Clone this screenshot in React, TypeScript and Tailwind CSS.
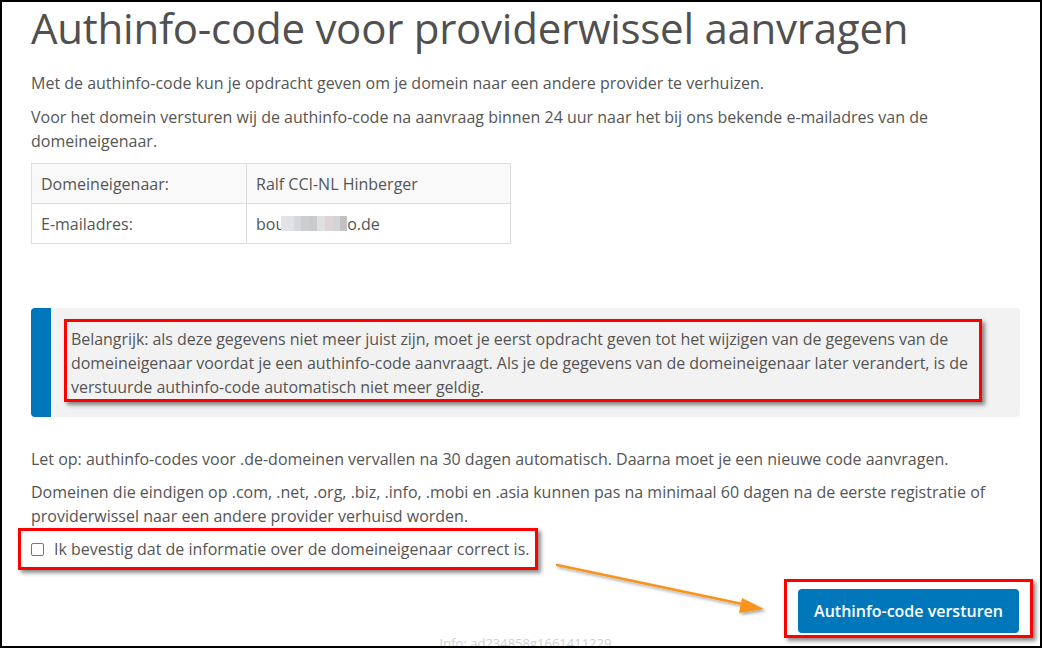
import React from "react";

export default function App() {
  const font = { fontFamily: '"Open Sans", "Noto Sans", sans-serif' };
  return (
    <div
      className="relative w-[1042px] h-[648px] overflow-hidden border-2 border-black bg-white text-[#555555]"
      style={font}
    >
      <div className="pl-[29px] pr-[20px] pt-[1px]">
        <h1 className="text-[42px] leading-[50px] font-medium text-[#505050] tracking-[-0.25px]">
          Authinfo-code voor providerwissel aanvragen
        </h1>
        <p className="mt-[18px] text-[16px] leading-[24px]">
          Met de authinfo-code kun je opdracht geven om je domein naar een andere provider te verhuizen.
        </p>
        <p className="mt-[10px] text-[16px] leading-[24px]">
          Voor het domein versturen wij de authinfo-code na aanvraag binnen 24 uur naar het bij ons bekende e-mailadres van de domeineigenaar.
        </p>
        <table className="mt-[10px] w-[480px] border-collapse text-[16px] leading-[24px]">
          <tbody>
            <tr className="h-10 bg-[#f9f9f9]">
              <td className="w-[215px] border border-[#dddddd] px-[9px]">Domeineigenaar:</td>
              <td className="border border-[#dddddd] px-[9px]">Ralf CCI-NL Hinberger</td>
            </tr>
            <tr className="h-10">
              <td className="border border-[#dddddd] px-[9px]">E-mailadres:</td>
              <td className="border border-[#dddddd] px-[9px]">
                <span className="inline-flex items-center">
                  bou
                  <span className="-ml-[4px] inline-flex h-[15px] items-stretch">
                    <span className="w-[6px] bg-[#e3e3e6]" />
                    <span className="w-[7px] bg-[#dfe2e8]" />
                    <span className="w-[7px] bg-[#d6d8dc]" />
                    <span className="w-[8px] bg-[#cdced2]" />
                    <span className="w-[8px] bg-[#c9cbcc]" />
                    <span className="w-[8px] bg-[#dfe0e0]" />
                    <span className="w-[8px] bg-[#dcd5d3]" />
                    <span className="w-[7px] bg-[#d2d4d9]" />
                    <span className="w-[7px] bg-[#c4bfc1]" />
                  </span>
                  o.de
                </span>
              </td>
            </tr>
          </tbody>
        </table>

        <div className="mt-[64px] flex h-[109px] overflow-hidden rounded-[4px] bg-[#f2f2f2]">
          <div className="w-[20px] shrink-0 bg-[#0077bb]" />
          <div className="pl-[13px] pr-[38px] pt-[11px]">
            <div className="border-[3px] border-[#ff0000] pl-[4px] pr-0 pt-[5px] shadow-[3px_3px_4px_rgba(0,0,0,0.45)] text-[16px] leading-[24px] tracking-[-0.05px]">
              Belangrijk: als deze gegevens niet meer juist zijn, moet je eerst opdracht geven tot het wijzigen van de gegevens van de domeineigenaar voordat je een authinfo-code aanvraagt. Als je de gegevens van de domeineigenaar later verandert, is de verstuurde authinfo-code automatisch niet meer geldig.
            </div>
          </div>
        </div>

        <p className="mt-[30px] text-[16px] leading-[24px]">
          Let op: authinfo-codes voor .de-domeinen vervallen na 30 dagen automatisch. Daarna moet je een nieuwe code aanvragen.
        </p>
        <p className="mt-[9px] text-[16px] leading-[24px]">
          Domeinen die eindigen op .com, .net, .org, .biz, .info, .mobi en .asia kunnen pas na minimaal 60 dagen na de eerste registratie of providerwissel naar een andere provider verhuisd worden.
        </p>
        <div className="-ml-[13px] w-[520px] border-[3px] border-[#ff0000] py-[6px] pl-[10px] shadow-[3px_3px_4px_rgba(0,0,0,0.45)]">
          <label className="flex items-center gap-[10px] text-[16px] leading-[24px]">
            <span className="h-[13px] w-[13px] rounded-[2px] border border-[#767676] bg-white" />
            Ik bevestig dat de informatie over de domeineigenaar correct is.
          </label>
        </div>
        <div className="mt-[9px] flex justify-end">
          <div className="-mr-[13px] border-[3px] border-[#ff0000] pb-[2px] pl-[11px] pr-[11px] pt-[7px] shadow-[3px_3px_4px_rgba(0,0,0,0.45)]">
            <button className="h-[44px] w-[221px] rounded-[4px] bg-[#0077bb] text-[16px] font-semibold text-white">
              Authinfo-code versturen
            </button>
          </div>
        </div>
        <div className="-mt-[4px] text-center text-[13px] leading-[18px] text-[#d0d0d0]">
          Info: ad234858g1661411229
        </div>
      </div>

      <svg
        className="pointer-events-none absolute left-0 top-0"
        width="1042"
        height="648"
        viewBox="0 0 1042 648"
      >
        <defs>
          <filter id="sh" x="-10%" y="-50%" width="130%" height="200%">
            <feDropShadow dx="2" dy="2" stdDeviation="1.5" floodColor="#000" floodOpacity="0.35" />
          </filter>
        </defs>
        <g filter="url(#sh)">
          <line x1="555" y1="563" x2="745" y2="603" stroke="#f7941d" strokeWidth="2.5" strokeLinecap="round" />
          <polygon points="762,607 740,596 737,611" fill="#f7941d" />
        </g>
      </svg>
    </div>
  );
}
